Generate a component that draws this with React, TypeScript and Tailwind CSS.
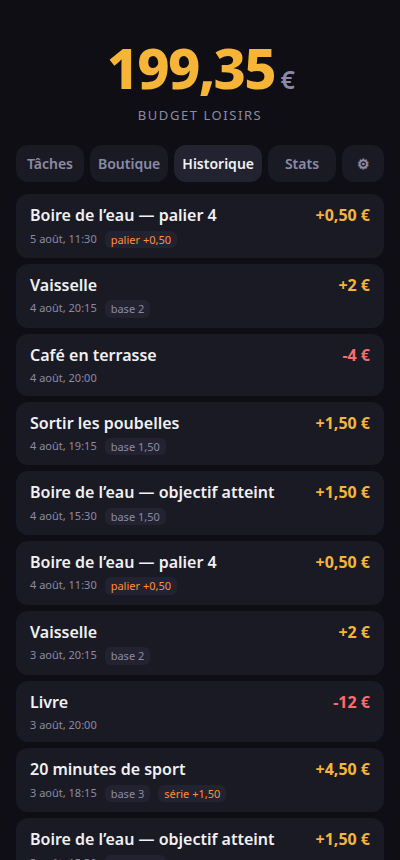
import React, { useState } from 'react';

type Chip = { label: string; bonus?: boolean };
type Entry = { title: string; date: string; amount: string; chips?: Chip[] };

const entries: Entry[] = [
  { title: 'Boire de l’eau — palier 4', date: '5 août, 11:30', amount: '+0,50 €', chips: [{ label: 'palier +0,50', bonus: true }] },
  { title: 'Vaisselle', date: '4 août, 20:15', amount: '+2 €', chips: [{ label: 'base 2' }] },
  { title: 'Café en terrasse', date: '4 août, 20:00', amount: '-4 €' },
  { title: 'Sortir les poubelles', date: '4 août, 19:15', amount: '+1,50 €', chips: [{ label: 'base 1,50' }] },
  { title: 'Boire de l’eau — objectif atteint', date: '4 août, 15:30', amount: '+1,50 €', chips: [{ label: 'base 1,50' }] },
  { title: 'Boire de l’eau — palier 4', date: '4 août, 11:30', amount: '+0,50 €', chips: [{ label: 'palier +0,50', bonus: true }] },
  { title: 'Vaisselle', date: '3 août, 20:15', amount: '+2 €', chips: [{ label: 'base 2' }] },
  { title: 'Livre', date: '3 août, 20:00', amount: '-12 €' },
  { title: '20 minutes de sport', date: '3 août, 18:15', amount: '+4,50 €', chips: [{ label: 'base 3' }, { label: 'série +1,50', bonus: true }] },
  { title: 'Boire de l’eau — objectif atteint', date: '3 août, 15:30', amount: '+1,50 €', chips: [{ label: 'base 1,50' }] },
];

const tabs = ['Tâches', 'Boutique', 'Historique', 'Stats', '⚙'];

const EntryCard: React.FC<{ entry: Entry }> = ({ entry }) => (
  <li className="flex justify-between items-start rounded-xl bg-[#1a1a24] px-3.5 py-2.5">
    <div>
      <div className="font-semibold">{entry.title}</div>
      <div className="mt-1 flex gap-2 text-[11px] leading-[1.4] text-[#8b8ba7]">
        <span>{entry.date}</span>
        {entry.chips?.map((chip) => (
          <span
            key={chip.label}
            className={`rounded-md bg-[#232230] px-1.5 py-px ${chip.bonus ? 'text-[#ff9138]' : ''}`}
          >
            {chip.label}
          </span>
        ))}
      </div>
    </div>
    <div className={`font-bold whitespace-nowrap ${entry.amount.startsWith('-') ? 'text-[#ff6b6b]' : 'text-[#f7b538]'}`}>
      {entry.amount}
    </div>
  </li>
);

const App: React.FC = () => {
  const [active, setActive] = useState('Historique');

  return (
    <div className="h-screen overflow-hidden bg-[#0f0e14] px-4 text-base leading-[1.4] text-[#f0f0f5] font-['Noto_Sans',sans-serif]">
      <header className="pt-[39px] pb-[21px] text-center">
        <div className="text-[56px] leading-none font-extrabold tracking-[-1.68px] text-[#f7b538]">
          199,35<span className="ml-[5.6px] text-[25.2px] leading-none font-semibold text-[#8b8ba7]">€</span>
        </div>
        <div className="mt-[11px] text-[13px] tracking-[1.56px] uppercase text-[#8b8ba7]">Budget loisirs</div>
      </header>

      <nav className="flex gap-1.5">
        {tabs.map((tab) => (
          <button
            key={tab}
            type="button"
            onClick={() => setActive(tab)}
            className={`h-[37px] rounded-xl px-2 text-sm font-semibold cursor-pointer ${tab === '⚙' ? 'w-[42px] flex-none' : 'flex-1'} ${
              tab === active ? 'bg-[#232230] text-[#f0f0f5]' : 'bg-[#1a1a24] text-[#8b8ba7]'
            }`}
          >
            {tab}
          </button>
        ))}
      </nav>

      <ul className="mt-3 flex flex-col gap-1.5">
        {entries.map((entry) => (
          <EntryCard key={entry.title + entry.date} entry={entry} />
        ))}
      </ul>
    </div>
  );
};

export default App;
